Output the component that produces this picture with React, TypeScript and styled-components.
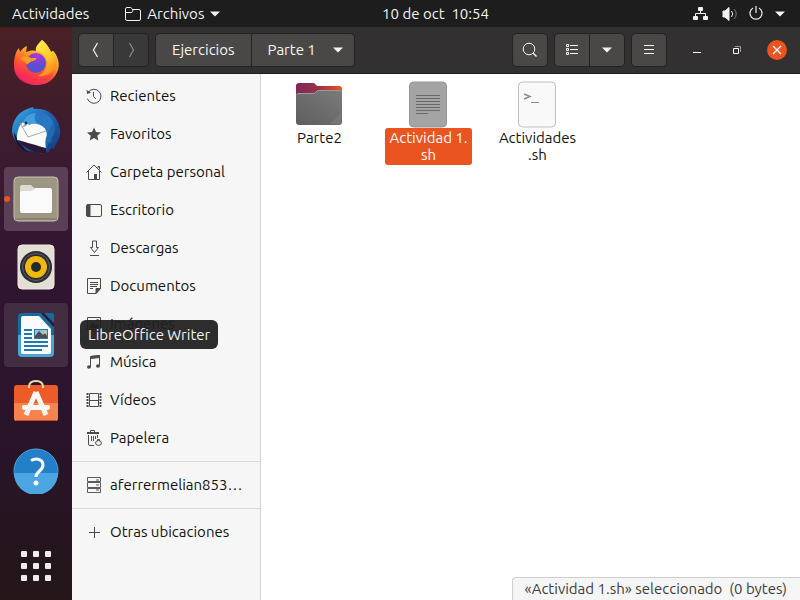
import React from "react";
import styled, { createGlobalStyle, css } from "styled-components";

const GlobalStyle = createGlobalStyle`
  * { box-sizing: border-box; }
  body { margin: 0; background: #fff; color: #111; font: 15px/18px Ubuntu, "Noto Sans", sans-serif; }
  button, a { font: inherit; color: inherit; text-decoration: none; }
  button { border: 0; padding: 0; background: none; cursor: pointer; }
  svg { display: block; flex: none; }
`;

const Desktop = styled.div`
  min-height: 100vh;
  display: flex;
  flex-direction: column;
`;
const TopBar = styled.header`
  height: 27px;
  display: flex;
  background: #1d1d1d;
  color: #f2f2f2;
`;
const TopLeft = styled.div`
  flex: 1 1 86px;
  display: flex;
  align-items: center;
  gap: 36px;
  padding-left: 12px;
`;
const TopRight = styled.div`
  flex: 1 1 0;
  display: flex;
  align-items: center;
  justify-content: flex-end;
  gap: 12px;
  padding-right: 15px;
`;
const TopButton = styled.button`
  display: flex;
  align-items: center;
  gap: 6px;
`;
const Clock = styled(TopButton)`
  white-space: pre;
`;
const Workspace = styled.div`
  flex: 1;
  display: flex;
`;
const Dock = styled.nav`
  width: 72px;
  flex: none;
  display: flex;
  flex-direction: column;
  gap: 4px;
  padding: 4px 4px 2px;
  background: linear-gradient(#4a2025 0, #3b1b2f 22%, #301530 45%, #29142a 72%, #241619 100%);
`;
const DockItem = styled.button<{ $active?: boolean; $hover?: boolean; $last?: boolean }>`
  position: relative;
  width: 64px;
  height: 64px;
  display: flex;
  align-items: center;
  justify-content: center;
  border-radius: 4px;
  ${(p) => p.$active && css`background: #5b3f56;`}
  ${(p) => p.$hover && css`background: #422d43;`}
  ${(p) => p.$last && css`margin-top: auto;`}
`;
const RunningDot = styled.span`
  position: absolute;
  left: 0;
  top: 29px;
  width: 6px;
  height: 6px;
  border-radius: 50%;
  background: #e95420;
`;
const Tooltip = styled.span`
  position: absolute;
  z-index: 2;
  left: 76px;
  top: 17px;
  padding: 6px 8px 5px;
  border-radius: 6px;
  background: rgba(32, 32, 32, 0.94);
  color: #f2f2f2;
  white-space: nowrap;
`;
const Window = styled.main`
  flex: 1;
  min-width: 0;
  display: flex;
  flex-direction: column;
`;
const HeaderBar = styled.div`
  display: flex;
  gap: 6px;
  padding: 6px 13px 6px 6px;
  background: #323030;
  border-bottom: 1px solid #1f1e1e;
`;
const ButtonGroup = styled.div`
  display: flex;
  gap: 1px;
  padding: 1px;
  border-radius: 5px;
  background: #232222;
`;
const HeaderButton = styled.button<{ $wide?: boolean; $dim?: boolean }>`
  display: flex;
  align-items: center;
  justify-content: center;
  gap: 17px;
  min-width: 34px;
  height: 32px;
  padding: 0 ${(p) => (p.$wide ? 16 : 0)}px;
  background: ${(p) => (p.$dim ? "#3a3939" : "#4a4846")};
  color: ${(p) => (p.$dim ? "#8d8b89" : "#f6f5f4")};
  &:first-child { border-radius: 4px 0 0 4px; }
  &:last-child { border-radius: 0 4px 4px 0; }
  &:only-child { border-radius: 4px; }
`;
const PathMenuButton = styled(HeaderButton)`
  padding-right: 11px;
`;
const Spacer = styled.div`
  flex: 1;
`;
const WindowControls = styled.div`
  display: flex;
  align-items: center;
  gap: 20px;
  margin-left: 14px;
  color: #fff;
`;
const ControlButton = styled.button<{ $close?: boolean }>`
  width: 20px;
  height: 20px;
  display: flex;
  align-items: center;
  justify-content: center;
  border-radius: 50%;
  background: ${(p) => (p.$close ? "#e95420" : "none")};
`;
const Body = styled.div`
  flex: 1;
  display: flex;
`;
const Sidebar = styled.nav`
  width: 189px;
  flex: none;
  padding-top: 3px;
  background: #f6f6f6;
  border-right: 1px solid #d3d3d3;
`;
const Place = styled.a`
  display: flex;
  align-items: center;
  gap: 8px;
  height: 38px;
  padding: 0 14px;
  svg { color: #4a4a4a; }
`;
const PlaceLabel = styled.span`
  white-space: nowrap;
  overflow: hidden;
  text-overflow: ellipsis;
`;
const Divider = styled.hr`
  height: 1px;
  margin: 4px 0;
  border: 0;
  background: #dadada;
`;
const Content = styled.section`
  position: relative;
  flex: 1;
  background: #fff;
`;
const FileGrid = styled.div`
  display: grid;
  grid-template-columns: repeat(auto-fill, 109px);
  padding: 6px 4px;
`;
const FileItem = styled.button`
  display: flex;
  flex-direction: column;
  align-items: center;
`;
const FileLabel = styled.span<{ $selected?: boolean }>`
  padding: 1px 4px 2px;
  border-radius: 3px;
  line-height: 17px;
  white-space: nowrap;
  ${(p) => p.$selected && css`background: #e95420; color: #fff;`}
`;
const StatusBar = styled.div`
  position: absolute;
  right: 0;
  bottom: 0;
  padding: 2px 13px 2px 12px;
  border: solid #cfcfcf;
  border-width: 1px 0 0 1px;
  border-radius: 4px 0 0 0;
  background: #f5f5f5;
  color: #3d3d3d;
  white-space: pre;
`;

const Caret = () => (
  <svg width="10" height="6" viewBox="0 0 10 6"><path d="M0 .5h10L5 5.5z" fill="currentColor" /></svg>
);

const FolderOutline = () => (
  <svg width="16" height="16" viewBox="0 0 16 16" fill="none" stroke="currentColor">
    <path d="M.5 12.500V3Q.5 1.500 2 1.500h3.500q1 0 1.300 1l.4 1H14q1.500 0 1.500 1.500v8q0 1.500-1.500 1.500H2q-1.500 0-1.500-1.500zM.5 6.500h5.700q1 0 1.400-1l.6-2" />
  </svg>
);
const Network = () => (
  <svg width="16" height="16" viewBox="0 0 16 16" fill="currentColor">
    <rect x="5" y="1" width="5" height="4" rx="1" /><rect x="0" y="10" width="5" height="4" rx="1" /><rect x="10" y="10" width="5" height="4" rx="1" />
    <path d="M7.500 4v3.500M2.500 10V7.500h10V10" fill="none" stroke="currentColor" />
  </svg>
);
const Volume = () => (
  <svg width="16" height="16" viewBox="0 0 16 16" fill="none" stroke="currentColor">
    <path d="M2 5h2l4-3.500v13L4 11H2z" fill="currentColor" />
    <path d="M10.500 5q2.500 3 0 6" /><path d="M13 3q4.500 5 0 10" opacity=".45" />
  </svg>
);
const Power = () => (
  <svg width="14" height="16" viewBox="0 0 14 16" fill="none" stroke="currentColor" strokeWidth="1.200">
    <path d="M7 0v7M4 2a6 6 0 1 0 6 0" />
  </svg>
);

const Chevron = ({ right }: { right?: boolean }) => (
  <svg width="16" height="16" viewBox="0 0 16 16" fill="none" stroke="currentColor" strokeWidth="1.200">
    <path d={right ? "M6.500 1l4 7-4 7" : "M9.500 1l-4 7 4 7"} />
  </svg>
);
const Search = () => (
  <svg width="16" height="16" viewBox="0 0 16 16" fill="none" stroke="currentColor">
    <circle cx="7" cy="7" r="5.800" /><path d="M11 11l3.500 3.500" strokeWidth="1.400" />
  </svg>
);
const ListIcon = () => (
  <svg width="16" height="16" viewBox="0 0 16 16" fill="none" stroke="currentColor">
    <path d="M2.500 2.500h2v2h-2zM2.500 6.500h2v2h-2zM2.500 10.500h2v2h-2zM6 3.500h8M6 7.500h8M6 11.500h8" />
  </svg>
);
const MenuIcon = () => (
  <svg width="16" height="16" viewBox="0 0 16 16" stroke="currentColor"><path d="M3 3.500h10M3 7.500h10M3 11.500h10" /></svg>
);

const placeIcons: Record<string, React.ReactNode> = {
  recent: <><path d="M2.200 4.300A7 7 0 1 1 1 9" strokeDasharray="37 2 2 2" /><path d="M.5 2l.7 4 3.800-1.500z" fill="currentColor" stroke="none" /><path d="M7.500 4v4.500L10 11" /></>,
  star: <path d="M8 1.500l2 4.500 5 .5-3.700 3.300 1 4.700L8 12l-4.300 2.500 1-4.700L1 6.500 6 6z" fill="currentColor" stroke="none" />,
  home: <><path d="M.5 8.500L8 1l7.500 7.500M2.500 7v8.500h11V7M12 4V2.500h1.500v3" /><path d="M8 10h3v5H8z" fill="currentColor" stroke="none" /></>,
  desktop: <><rect x=".5" y="2.500" width="15" height="12" rx="1.500" /><path d="M1 3h3v11H1z" fill="currentColor" /></>,
  download: <path d="M6.500 1v6.500h-2l4 5 4-5h-2V1zM4 15.500h9" />,
  document: <><path d="M1.500.500h13v10l-4.500 5H1.500zM4 4.500h8M4 6.500h8M4 8.500h7M4 10.500h3" /><path d="M10 15.500v-5h4.500z" fill="currentColor" /></>,
  image: <><path d="M1.500 1.500h13v12h-13z" /><path d="M3 12l3.500-6 3 3.500 1-1.500 3 4z" fill="currentColor" stroke="none" /><circle cx="11.500" cy="4.500" r="1" fill="currentColor" /></>,
  music: <><path d="M4.500 13V2.500l9-1V12" /><path d="M4.500 2.500l9-1v2l-9 1z" fill="currentColor" /><ellipse cx="3" cy="13" rx="2" ry="1.800" fill="currentColor" stroke="none" /><ellipse cx="12" cy="12" rx="2" ry="1.800" fill="currentColor" stroke="none" /></>,
  video: <><path d="M3.500 1.500h9v13h-9zM3.500 8.500h9" /><path d="M1.500 1v14M14.500 1v14" strokeWidth="2" strokeDasharray="2 1" /></>,
  trash: <><path d="M4.500 2.500v-2h4v2M2.500 5v9q0 1.500 1.500 1.500h4M11.500 5v3M5.500 6v5M7.500 6v5M9.500 6v3" /><path d="M1 3h12" strokeWidth="2" /><path d="M11.500 11V9.500h2V11" /><ellipse cx="12.500" cy="13" rx="2.900" ry="2.400" /></>,
  server: <path d="M1.500.500h13v4h-13zM1.500 5.500h13v5h-13zM1.500 11.500h13v4h-13zM10 3h3M10 8h3M10 13h3" strokeWidth=".900" />,
  plus: <path d="M8.500 3v11M3 8.500h11" />,
};
const PlaceIcon = ({ name }: { name: string }) => (
  <svg width="16" height="16" viewBox="0 0 16 16" fill="none" stroke="currentColor" aria-hidden="true">{placeIcons[name]}</svg>
);

const Firefox = () => (
  <svg width="48" height="48" viewBox="0 0 48 48">
    <defs>
      <linearGradient id="ffBody" x1=".8" y1="0" x2=".3" y2="1"><stop offset="0" stopColor="#fff044" /><stop offset=".35" stopColor="#ffb125" /><stop offset=".65" stopColor="#ff552d" /><stop offset="1" stopColor="#ed1670" /></linearGradient>
      <radialGradient id="ffGlobe" cx=".6" cy=".15"><stop offset="0" stopColor="#b833e1" /><stop offset="1" stopColor="#5b4ed2" /></radialGradient>
      <linearGradient id="ffTail" x1="0" y1="0" x2=".5" y2="1"><stop offset="0" stopColor="#fff34f" /><stop offset=".6" stopColor="#ffca2e" /><stop offset="1" stopColor="#ff8a1f" /></linearGradient>
    </defs>
    <path d="M3 17c1-4 2-6 4-8l1 4c2-3 4-5 7-6l-1 6c3-1 6-2 10-1 0-4 3-8 6-11 5 4 7 8 9 12l2-1c5 5 7 13 5 19-3 9-11 15-21 15C11 46 2 38 2 27c0-4 0-7 1-10z" fill="url(#ffBody)" />
    <path d="M4 28c4 8 10 13 19 13 7 0 14-3 19-9-3 9-10 14-18 14-10 0-18-8-20-18z" fill="#ff3450" opacity=".45" />
    <path d="M30 1c-4 4-7 7-6 11 6 1 11 5 11 12 0 6-4 11-9 13 8 1 16-4 19-12 1-6-1-10-4-13l-2 1c-2-4-4-8-9-12z" fill="url(#ffTail)" />
    <circle cx="24" cy="24" r="10" fill="url(#ffGlobe)" />
    <path d="M8 20c3-3 7-4 11-1h5c1 2-2 3-5 3.500l-4 3c-1-2-4-4-7-5.500z" fill="#ff9a1f" />
  </svg>
);
const Thunderbird = () => (
  <svg width="50" height="50" viewBox="0 0 50 50">
    <defs><linearGradient id="tbBody" x1="0" y1="0" x2="1" y2="1"><stop offset="0" stopColor="#35b4e8" /><stop offset=".4" stopColor="#236bbd" /><stop offset="1" stopColor="#113876" /></linearGradient></defs>
    <path d="M16 3l6-2 1 2c13-2 24 7 26 20 1 6-1 11-4 15l-2 5-3-1-3 5-3-2-4 3-1-3c-15 3-27-8-28-20C1 16 6 7 16 3z" fill="url(#tbBody)" />
    <path d="M3 26c0 11 6 17 14 20L7 35z" fill="#17152f" />
    <path d="M12 16l22-1c1 8 3 10 2 18l-1 11c-10-2-22-6-29-10 0-8 1-13 6-18z" fill="#fafafa" />
    <path d="M6 34c9 2 21 6 29 8v5C23 48 12 41 6 34z" fill="#2b1836" />
    <path d="M9 17l8 14 18-6" fill="none" stroke="#aaa" />
    <path d="M12 17C13 9 20 4 29 6c9 2 14 8 14 15l-7 13c0-6 0-11-5-14-4-3-9-4-13-1-1-2-3-3-6-2z" fill="#2876c4" />
    <path d="M12 17c1-6 6-10 13-10-2 4-2 9 4 12-4-1-8-2-11 0-1-2-3-3-6-2z" fill="#3f9edb" />
    <path d="M42 16c3 6 2 11-1 15l-1 6-2-1-3 7c-1-5-1-10 1-14z" fill="#2369ae" />
    <path d="M17 15l-7 7 5-2z" fill="#8fa7b8" /><circle cx="15" cy="17" r="1.500" fill="#102c4a" />
  </svg>
);
const Files = () => (
  <svg width="46" height="46" viewBox="0 0 46 46">
    <rect x="1" y="1" width="44" height="44" rx="4" fill="#9d9683" stroke="#c9c3ae" />
    <path d="M7 18V11q0-2 2-2h9l4 4v6z" fill="#dedad0" />
    <path d="M7 17q0-2 2-2h9q2 0 4-3h15q2 0 2 2v21q0 2-2 2H9q-2 0-2-2z" fill="#fafafa" />
    <path d="M2 43h42" stroke="#746e5f" />
  </svg>
);
const Speaker = () => (
  <svg width="38" height="46" viewBox="0 0 38 46">
    <rect x="1" y="1" width="36" height="44" rx="4" fill="#e3dfd4" stroke="#eeeae1" />
    <circle cx="19" cy="23" r="16" fill="#2c2e34" /><circle cx="19" cy="23" r="13.500" fill="none" stroke="#5c606a" />
    <circle cx="19" cy="23" r="11" fill="#f0b90b" /><circle cx="19" cy="23" r="5" fill="#27282a" />
  </svg>
);
const Writer = () => (
  <svg width="38" height="46" viewBox="0 0 38 46">
    <path d="M5 1h19l13 14v26q0 4-4 4H5q-4 0-4-4V5q0-4 4-4z" fill="#156a9e" />
    <path d="M1 23h36v18q0 4-4 4H5q-4 0-4-4z" fill="#49a5d2" />
    <path d="M6 4h16l12 13v23q0 2-2 2H6q-2 0-2-2V6q0-2 2-2z" fill="#fafafa" />
    <path d="M24 1l13 14v-3L27 1z" fill="#2b1b2d" />
    <path d="M27 1h8q2 0 2 2v8z" fill="#156a9e" />
    <path d="M7 18h8M7 22h8M7 26h8M7 30h24M7 34h24M7 38h18" stroke="#2478aa" strokeWidth="2" />
    <path d="M17 17h14v10H17z" fill="#257ead" /><path d="M18 18h12v8H18z" fill="#88c7e4" />
    <path d="M18 26v-2l4-5 4 4 2-2 2 3v2z" fill="#4e4b4a" /><circle cx="28" cy="20" r="1.500" fill="#f5c640" />
  </svg>
);
const Software = () => (
  <svg width="46" height="46" viewBox="0 4 46 46">
    <path d="M4 9h38q3 0 3 3v30q0 3-3 3H4q-3 0-3-3V12q0-3 3-3z" fill="#ed5b28" />
    <path d="M1 27h44v15q0 3-3 3H4q-3 0-3-3z" fill="#f5824f" />
    <path d="M16 12v-1q0-6 7-6t7 6v1" fill="none" stroke="#f1dca8" strokeWidth="2" />
    <path d="M23 16L13 39M23 16l10 23" stroke="#faf7f3" strokeWidth="5" /><rect x="9" y="29" width="28" height="5" rx="2" fill="#faf7f3" />
    <path d="M3 44.500h40" stroke="#c84c21" />
  </svg>
);
const Help = () => (
  <svg width="46" height="46" viewBox="0 0 46 46">
    <circle cx="23" cy="23" r="22" fill="#247fc9" /><path d="M1 25h44a22 22 0 0 1-44 0z" fill="#4aa5e2" />
    <circle cx="23" cy="23" r="22" fill="none" stroke="#4baade" strokeWidth="1" />
    <path d="M18 12.500c6-3 12-1 12 4.500 0 6-7 6-7 12" fill="none" stroke="#fff" strokeWidth="3" /><circle cx="23" cy="35" r="2.500" fill="#fff" />
  </svg>
);
const AppsGrid = () => (
  <svg width="30" height="30" viewBox="0 0 30 30" fill="#eeeeec">
    {[0, 12, 24].map((y) => [0, 12, 24].map((x) => <rect key={`${x}-${y}`} x={x} y={y} width="6" height="6" rx="1" />))}
  </svg>
);

const FolderFile = () => (
  <svg width="50" height="48" viewBox="0 0 50 48">
    <defs>
      <linearGradient id="folderBack"><stop offset="0" stopColor="#7c2a58" /><stop offset=".5" stopColor="#9b3245" /><stop offset="1" stopColor="#e95420" /></linearGradient>
      <linearGradient id="folderFront" x1="0" y1="1" x2="1" y2="0"><stop offset="0" stopColor="#5e5e5e" /><stop offset="1" stopColor="#7b7b7b" /></linearGradient>
    </defs>
    <path d="M1 6q0-3 3-3h14q2 0 3 2l1 1h22q3 0 3 3v16H1z" fill="url(#folderBack)" />
    <path d="M1 16q0-3 3-3h14q2 0 3-1.500t3-1.500h20q3 0 3 3v29q0 3-3 3H4q-3 0-3-3z" fill="url(#folderFront)" />
    <path d="M1.500 15q.5-1.500 2.500-1.500h14q2 0 3-1.500t3-1.500h20q2 0 2.500 1.500" fill="none" stroke="#999" />
    <path d="M46 33v9q0 2-2 2h-9z" fill="#8a8a8a" opacity=".3" />
  </svg>
);
const TextFile = () => (
  <svg width="50" height="48" viewBox="0 0 50 48">
    <rect x="5.500" y="2" width="37" height="45" rx="4" fill="#a4a4a4" stroke="#969696" />
    <path d="M12 15.500h24M12 18.500h24M12 21.500h24M12 24.500h24M12 27.500h24M12 30.500h24M12 33.500h12" stroke="#686868" />
  </svg>
);
const ScriptFile = () => (
  <svg width="50" height="48" viewBox="0 0 50 48">
    <rect x="5.500" y="2" width="37" height="45" rx="4" fill="#f9f9f9" stroke="#bfbfbf" />
    <path d="M11 14l6 2.500-6 2.500" fill="none" stroke="#8b8b8b" strokeWidth="1.500" /><path d="M18 22.500h8" stroke="#8b8b8b" />
  </svg>
);

const dockApps = [
  { name: "Firefox", icon: <Firefox /> },
  { name: "Thunderbird", icon: <Thunderbird /> },
  { name: "Archivos", icon: <Files />, active: true },
  { name: "Rhythmbox", icon: <Speaker /> },
  { name: "LibreOffice Writer", icon: <Writer />, hover: true },
  { name: "Software", icon: <Software /> },
  { name: "Ayuda", icon: <Help /> },
];
const places = [
  ["recent", "Recientes"], ["star", "Favoritos"], ["home", "Carpeta personal"], ["desktop", "Escritorio"],
  ["download", "Descargas"], ["document", "Documentos"], ["image", "Imágenes"], ["music", "Música"],
  ["video", "Vídeos"], ["trash", "Papelera"],
];
const files = [
  { lines: ["Parte2"], icon: <FolderFile /> },
  { lines: ["Actividad 1.", "sh"], icon: <TextFile />, selected: true },
  { lines: ["Actividades", ".sh"], icon: <ScriptFile /> },
];

const PlaceLink = ({ icon, label }: { icon: string; label: string }) => (
  <Place href="#"><PlaceIcon name={icon} /><PlaceLabel>{label}</PlaceLabel></Place>
);

export default function App() {
  return (
    <Desktop>
      <GlobalStyle />
      <TopBar>
        <TopLeft>
          <TopButton>Actividades</TopButton>
          <TopButton><FolderOutline />Archivos<Caret /></TopButton>
        </TopLeft>
        <Clock>10 de oct  10:54</Clock>
        <TopRight><Network /><Volume /><Power /><Caret /></TopRight>
      </TopBar>
      <Workspace>
        <Dock>
          {dockApps.map((app) => (
            <DockItem key={app.name} aria-label={app.name} $active={app.active} $hover={app.hover}>
              {app.icon}
              {app.active && <RunningDot />}
              {app.hover && <Tooltip role="tooltip">{app.name}</Tooltip>}
            </DockItem>
          ))}
          <DockItem $last aria-label="Mostrar aplicaciones"><AppsGrid /></DockItem>
        </Dock>
        <Window>
          <HeaderBar>
            <ButtonGroup>
              <HeaderButton aria-label="Atrás"><Chevron /></HeaderButton>
              <HeaderButton $dim aria-label="Adelante"><Chevron right /></HeaderButton>
            </ButtonGroup>
            <ButtonGroup>
              <HeaderButton $wide>Ejercicios</HeaderButton>
              <PathMenuButton $wide>Parte 1<Caret /></PathMenuButton>
            </ButtonGroup>
            <Spacer />
            <ButtonGroup><HeaderButton aria-label="Buscar"><Search /></HeaderButton></ButtonGroup>
            <ButtonGroup>
              <HeaderButton aria-label="Vista de lista"><ListIcon /></HeaderButton>
              <HeaderButton aria-label="Opciones de vista"><Caret /></HeaderButton>
            </ButtonGroup>
            <ButtonGroup><HeaderButton aria-label="Menú"><MenuIcon /></HeaderButton></ButtonGroup>
            <WindowControls>
              <ControlButton aria-label="Minimizar"><svg width="16" height="16" stroke="currentColor"><path d="M4 10.500h8" /></svg></ControlButton>
              <ControlButton aria-label="Restaurar"><svg width="16" height="16" fill="none" stroke="currentColor"><path d="M4.500 6.500h5v5h-5z" /><path d="M6 4.500h5.500V10" opacity=".5" /></svg></ControlButton>
              <ControlButton $close aria-label="Cerrar"><svg width="16" height="16" stroke="currentColor" strokeWidth="1.300"><path d="M4 4l8 8M12 4l-8 8" /></svg></ControlButton>
            </WindowControls>
          </HeaderBar>
          <Body>
            <Sidebar>
              {places.map(([icon, label]) => <PlaceLink key={icon} icon={icon} label={label} />)}
              <Divider />
              <PlaceLink icon="server" label="aferrermelian853…" />
              <Divider />
              <PlaceLink icon="plus" label="Otras ubicaciones" />
            </Sidebar>
            <Content>
              <FileGrid>
                {files.map((file) => (
                  <FileItem key={file.lines[0]}>
                    {file.icon}
                    <FileLabel $selected={file.selected}>
                      {file.lines.map((line, i) => <React.Fragment key={line}>{i > 0 && <br />}{line}</React.Fragment>)}
                    </FileLabel>
                  </FileItem>
                ))}
              </FileGrid>
              <StatusBar>«Actividad 1.sh» seleccionado  (0 bytes)</StatusBar>
            </Content>
          </Body>
        </Window>
      </Workspace>
    </Desktop>
  );
}
